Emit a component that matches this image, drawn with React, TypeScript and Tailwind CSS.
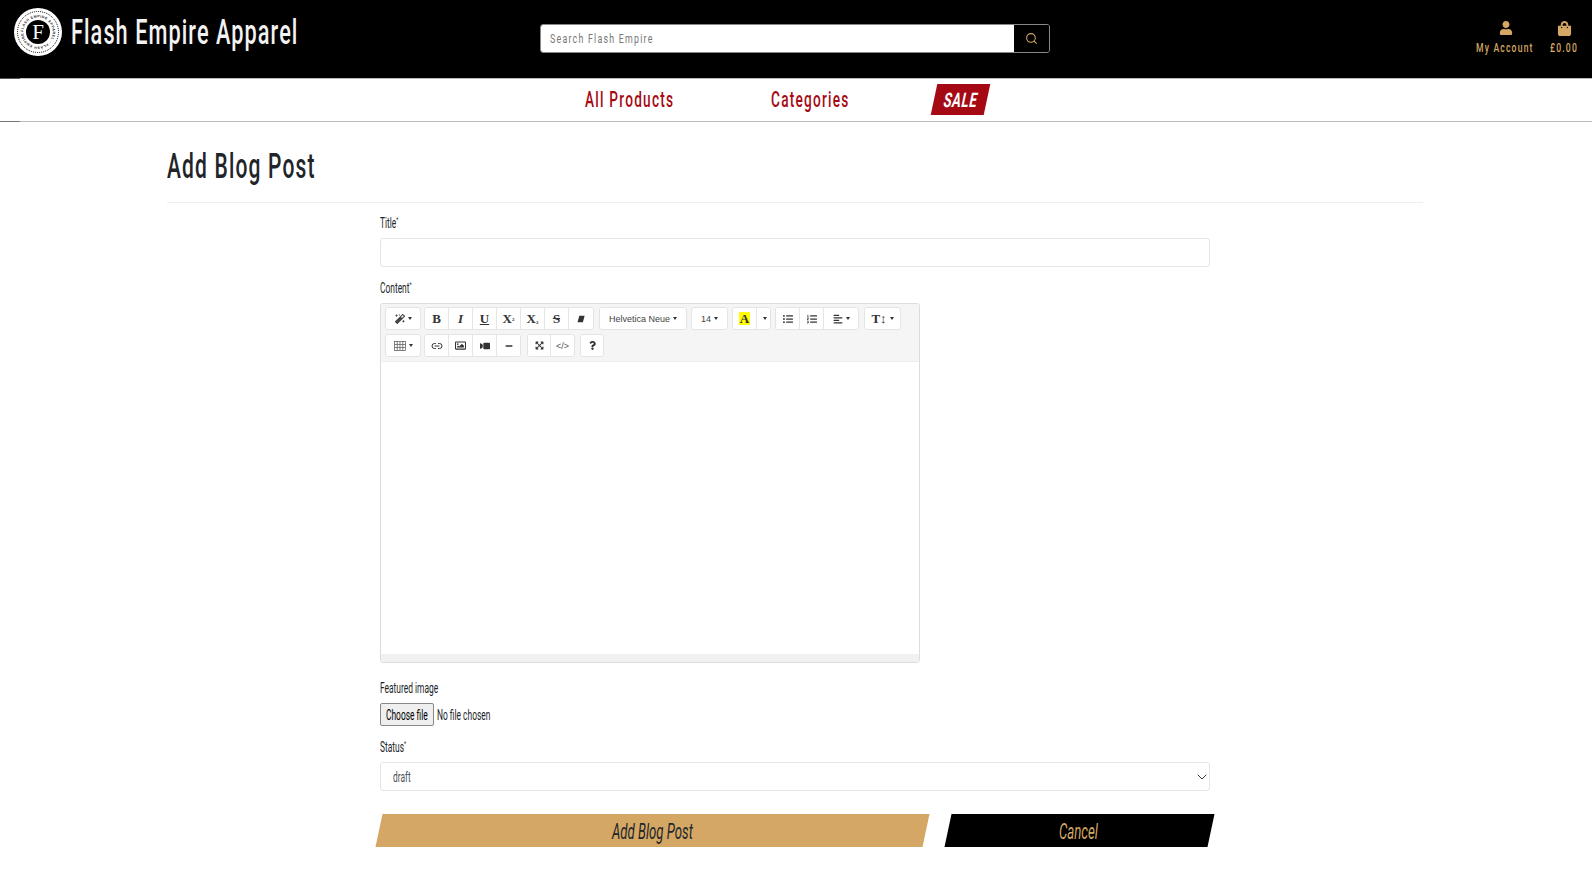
import type { ReactNode } from "react";
import {
  FaAlignLeft,
  FaExpandArrowsAlt,
  FaListOl,
  FaListUl,
  FaMagic,
  FaMinus,
  FaQuestion,
  FaRegImage,
  FaShoppingBag,
  FaUser,
  FaVideo,
} from "react-icons/fa";
import { ChevronDown, Link2, Search } from "lucide-react";

function Caret() {
  return <span className="ml-[3px] inline-block border-x-[2.5px] border-t-[3px] border-x-transparent border-t-[#333]" />;
}

// squeezed text, the original uses a condensed webfont we don't have
function Cond({ w, className, children }: { w: string; className?: string; children: ReactNode }) {
  return (
    <span className={`inline-block ${w}`}>
      <span className={`inline-block origin-left whitespace-nowrap font-['Roboto',sans-serif] ${className ?? ""}`}>{children}</span>
    </span>
  );
}

function Star() {
  return <span className="align-super text-[8px] leading-none">*</span>;
}

function Logo() {
  return (
    <svg width="50" height="50" viewBox="0 0 50 50" className="shrink-0">
      <defs>
        <path id="ring" d="M25 25 m-14.6 0 a14.6 14.6 0 1 1 29.2 0 a14.6 14.6 0 1 1 -29.2 0" />
      </defs>
      <circle cx="25" cy="25" r="24" fill="#fff" />
      <circle cx="25" cy="25" r="20.5" fill="none" stroke="#000" strokeWidth="1" strokeDasharray="1 1" />
      <text fontSize="3.5" fontWeight="700" fill="#222" fontFamily="Liberation Sans, sans-serif">
        <textPath href="#ring" textLength="90">FLASH EMPIRE APPAREL · FLASH EMPIRE</textPath>
      </text>
      <circle cx="25" cy="25" r="12" fill="#000" />
      <text x="25" y="32" textAnchor="middle" fontSize="21" fontWeight="400" fill="#fff" fontFamily="Liberation Serif, serif">
        F
      </text>
    </svg>
  );
}

function Tool({ w, children, className }: { w: string; children: ReactNode; className?: string }) {
  return (
    <div className={`flex h-[21px] ${w} items-center justify-center border-r border-[#e6e6e6] bg-white text-[#333] last:border-r-0 ${className ?? ""}`}>
      {children}
    </div>
  );
}

function Group({ children, className }: { children: ReactNode; className?: string }) {
  return <div className={`flex h-[23px] overflow-hidden rounded-[3px] border border-[#e4e4e4] ${className ?? ""}`}>{children}</div>;
}

const serif = "font-['Liberation_Serif',serif] text-[13px] font-bold leading-none";

function TableIcon() {
  return (
    <svg width="12" height="10" viewBox="0 0 12 10" fill="none" stroke="#666" strokeWidth="0.8">
      <rect x="0.5" y="0.5" width="11" height="9" />
      <path d="M0.5 3.5h11M0.5 6.5h11M3.25 0.5v9M6 0.5v9M8.75 0.5v9" />
    </svg>
  );
}

function EraserIcon() {
  return (
    <svg width="8" height="8" viewBox="0 0 9 9" fill="#333">
      <path d="M2.6 0.8h6l-2 7.4h-6z" />
    </svg>
  );
}

function Toolbar() {
  return (
    <div className="flex h-[58px] flex-col gap-[4px] rounded-t-[3px] border-b border-[#eee] bg-[#f5f5f5] pl-1 pt-[3px] font-['Liberation_Sans',sans-serif]">
      <div className="flex h-[23px]">
        <Group className="w-[36px]"><Tool w="w-full"><FaMagic size={10} className="text-[#444]" /><Caret /></Tool></Group>
        <Group className="ml-[3px]">
          <Tool w="w-[24px]"><span className={serif}>B</span></Tool>
          <Tool w="w-[24px]"><span className={`${serif} italic`}>I</span></Tool>
          <Tool w="w-[24px]"><span className={`${serif} underline`}>U</span></Tool>
          <Tool w="w-[24px]"><span className={serif}>X<sup className="text-[5px]">2</sup></span></Tool>
          <Tool w="w-[24px]"><span className={serif}>X<sub className="text-[5px]">2</sub></span></Tool>
          <Tool w="w-[24px]"><span className={`${serif} line-through`}>S</span></Tool>
          <Tool w="w-[24px]"><EraserIcon /></Tool>
        </Group>
        <Group className="ml-[5px]">
          <Tool w="w-[86px]"><span className="text-[9px] text-[#444]">Helvetica Neue</span><Caret /></Tool>
        </Group>
        <Group className="ml-[4px]">
          <Tool w="w-[35px]"><span className="text-[9px] text-[#444]">14</span><Caret /></Tool>
        </Group>
        <Group className="ml-[4px]">
          <Tool w="w-[24px]"><span className={`${serif} bg-[#ff0] px-[1px]`}>A</span></Tool>
          <Tool w="w-[13px]"><Caret /></Tool>
        </Group>
        <Group className="ml-[4px]">
          <Tool w="w-[24px]"><FaListUl size={10} /></Tool>
          <Tool w="w-[24px]"><FaListOl size={10} /></Tool>
          <Tool w="w-[34px]"><FaAlignLeft size={10} /><Caret /></Tool>
        </Group>
        <Group className="ml-[5px]">
          <Tool w="w-[35px]"><span className={serif}>T↕</span><Caret /></Tool>
        </Group>
      </div>
      <div className="flex h-[23px]">
        <Group className="w-[36px]"><Tool w="w-full"><TableIcon /><Caret /></Tool></Group>
        <Group className="ml-[3px]">
          <Tool w="w-[24px]"><Link2 size={12} strokeWidth={2} /></Tool>
          <Tool w="w-[24px]"><FaRegImage size={11} /></Tool>
          <Tool w="w-[24px]"><FaVideo size={10} className="-scale-x-100" /></Tool>
          <Tool w="w-[23px]"><FaMinus size={8} /></Tool>
        </Group>
        <Group className="ml-[6px]">
          <Tool w="w-[23px]"><FaExpandArrowsAlt size={9} /></Tool>
          <Tool w="w-[23px]"><span className="text-[9px] text-[#555]">&lt;/&gt;</span></Tool>
        </Group>
        <Group className="ml-[5px]">
          <Tool w="w-[22px]"><FaQuestion size={9} /></Tool>
        </Group>
      </div>
    </div>
  );
}

export default function App() {
  return (
    <div className="min-h-[880px] overflow-hidden bg-white">
      <header className="flex h-[78px] items-start bg-black">
        <div className="ml-[13px] mt-[7px]"><Logo /></div>
        <div className="ml-[8px] mt-[10px] h-[42px] w-[469px] text-[35px] leading-[42px] text-[#f2f2f2]">
          <Cond w="w-[226px]" className="scale-x-[0.62] font-medium tracking-[1.72px]">Flash Empire Apparel</Cond>
        </div>
        <div className="mt-[24px] flex h-[29px] w-[510px] overflow-hidden rounded-[3px] border border-[#888]">
          <div className="flex flex-1 items-center bg-white pl-[9px] text-[13px] text-[#777]">
            <Cond w="w-[120px]" className="scale-x-[0.68] tracking-[1.8px]">Search Flash Empire</Cond>
          </div>
          <div className="flex w-[35px] items-center justify-center bg-black text-[#d4a765]"><Search size={13} strokeWidth={2} /></div>
        </div>
        <div className="ml-auto mr-[13px] mt-[21px] flex gap-[15px] text-[#d4a765]">
          <div className="flex w-[59px] flex-col items-center">
            <FaUser size={14} />
            <div className="mt-[4px] text-[13px] font-medium leading-[16px]"><Cond w="w-[59px]" className="scale-x-[0.66] tracking-[1.8px]">My Account</Cond></div>
          </div>
          <div className="flex w-[29px] flex-col items-center">
            <FaShoppingBag size={15} />
            <div className="mt-[3px] text-[13px] font-medium leading-[16px]"><Cond w="w-[29px]" className="scale-x-[0.66] tracking-[1.8px]">£0.00</Cond></div>
          </div>
        </div>
      </header>

      <nav className="relative flex h-[44px] items-center border-y border-[#bbb] text-[#a50a14]">
        <span className="absolute -top-px left-0 h-px w-[20px] bg-[#555]" />
        <span className="absolute -bottom-px left-0 h-px w-[20px] bg-[#777]" />
        <div className="ml-[585px] mb-[2px] text-[22px] font-medium leading-none"><Cond w="w-[186px]" className="scale-x-[0.62] tracking-[2px]">All Products</Cond></div>
        <div className="mb-[2px] text-[22px] font-medium leading-none"><Cond w="w-[163px]" className="scale-x-[0.62] tracking-[2px]">Categories</Cond></div>
        <div className="mb-[2px] flex h-[31px] w-[53px] -skew-x-[12deg] items-center justify-center bg-[#a50a14] text-[20px] font-bold text-white">
          <Cond w="w-[33px]" className="scale-x-[0.65] tracking-[1px]">SALE</Cond>
        </div>
      </nav>

      <main className="pl-[167px] pr-[169px]">
        <h1 className="flex h-[81px] items-center border-b border-[#eee] pt-[8px] text-[35px] font-medium text-[#212529]">
          <Cond w="w-[147px]" className="scale-x-[0.6] tracking-[1.95px]">Add Blog Post</Cond>
        </h1>

        <form className="ml-[213px] w-[830px] text-[14px] leading-[20px] text-[#212529]">
          <div className="mt-[10px] h-[20px]"><Cond w="w-[30px]" className="scale-x-[0.6]">Title<Star /></Cond></div>
          <div className="mt-[5px] h-[29px] rounded-[3px] border border-[#e5e5e5]" />

          <div className="mt-[11px] h-[20px]"><Cond w="w-[40px]" className="scale-x-[0.6]">Content<Star /></Cond></div>
          <div className="mt-[5px] flex h-[360px] w-[540px] flex-col rounded-[3px] border border-[#ddd]">
            <Toolbar />
            <div className="flex-1 bg-white" />
            <div className="h-[8px] bg-[#f1f1f1]" />
          </div>

          <div className="mt-[15px] h-[20px]"><Cond w="w-[60px]" className="scale-x-[0.6]">Featured image</Cond></div>
          <div className="mt-[5px] flex h-[23px] items-center">
            <div className="flex h-[23px] w-[54px] items-center justify-center rounded-[2px] border border-[#888] bg-[#efefef] text-black">
              <Cond w="w-[42px]" className="scale-x-[0.6]">Choose file</Cond>
            </div>
            <span className="ml-[3px]"><Cond w="w-[56px]" className="scale-x-[0.6]">No file chosen</Cond></span>
          </div>

          <div className="mt-[11px] h-[20px]"><Cond w="w-[30px]" className="scale-x-[0.6]">Status<Star /></Cond></div>
          <div className="mt-[5px] flex h-[29px] items-center justify-between rounded-[3px] border border-[#e5e5e5] pl-[12px] text-[#495057]">
            <Cond w="w-[20px]" className="scale-x-[0.6]">draft</Cond>
            <ChevronDown size={16} strokeWidth={1.5} className="-mr-px text-[#343a40]" />
          </div>

          <div className="mt-[23px] flex h-[33px] gap-[22px] text-[22px] italic">
            <div className="-ml-[1px] flex h-full w-[547px] shrink-0 -skew-x-[12deg] items-center justify-center bg-[#d4a765] text-[#212529]">
              <span className="skew-x-[12deg]"><Cond w="w-[82px]" className="scale-x-[0.6]">Add Blog Post</Cond></span>
            </div>
            <div className="flex h-full w-[263px] shrink-0 -skew-x-[12deg] items-center justify-center bg-black text-[#d4a765]">
              <span className="skew-x-[12deg]"><Cond w="w-[41px]" className="scale-x-[0.6]">Cancel</Cond></span>
            </div>
          </div>
        </form>
      </main>
    </div>
  );
}
